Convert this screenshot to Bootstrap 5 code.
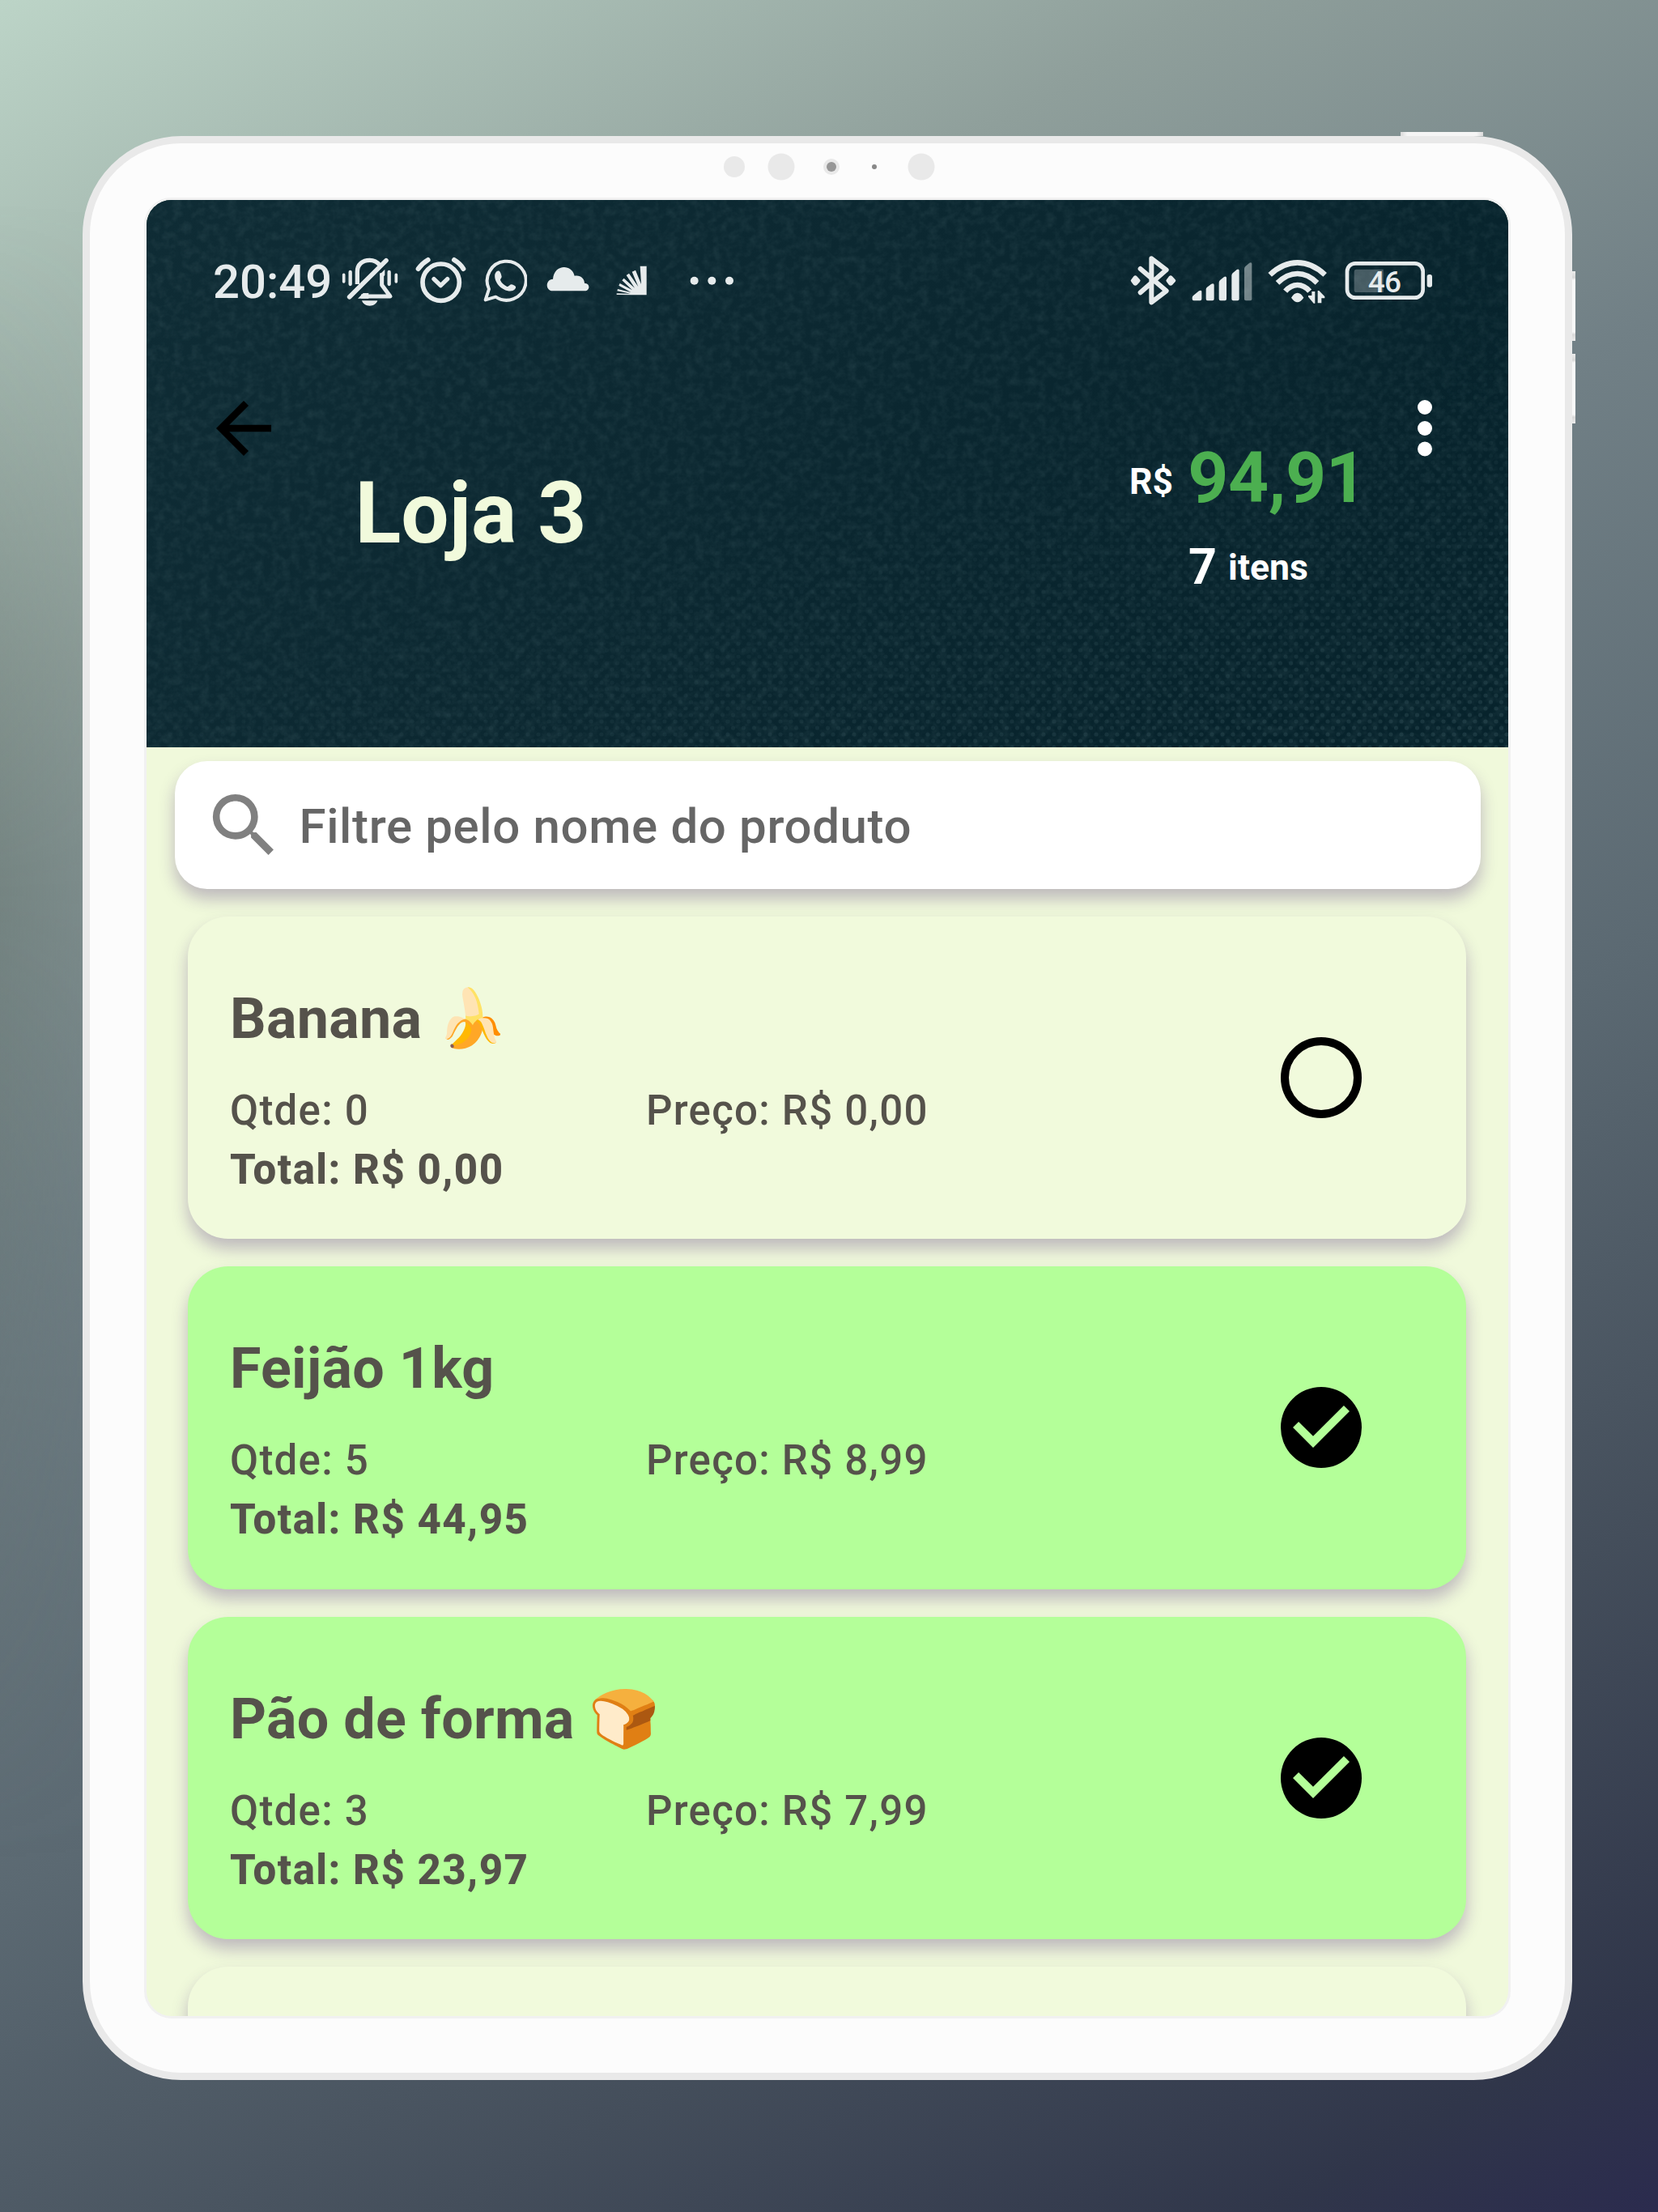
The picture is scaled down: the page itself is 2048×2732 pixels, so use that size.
<!DOCTYPE html>
<html lang="pt-BR">
<head>
<meta charset="utf-8">
<meta name="viewport" content="width=device-width, initial-scale=1">
<title>Loja 3</title>
<link href="https://cdn.jsdelivr.net/npm/bootstrap@5.3.0/dist/css/bootstrap.min.css" rel="stylesheet">
<style>
body{font-family:Roboto,"Noto Color Emoji",sans-serif;background:#56626b}
.stage{width:2048px;height:2732px;padding:168px 106px 163px 102px;
  background:linear-gradient(150deg,#bcd4c7 0%,#8f9f9b 22%,#718086 40%,#5b6972 60%,#444e5b 78%,#30364a 93%,#2b2b4e 100%)}
.stage::before{content:"";position:absolute;inset:0;background:linear-gradient(90deg,rgba(80,95,88,.3),rgba(80,95,88,0) 180px);
  -webkit-mask-image:linear-gradient(180deg,transparent 250px,#000 1100px,transparent 2300px);mask-image:linear-gradient(180deg,transparent 250px,#000 1100px,transparent 2300px)}
.tablet{width:1840px;height:2401px;border:9px solid #e9e9e9;border-radius:122px;background:#fcfcfc;padding:67px 67px 66px}
.key{background:linear-gradient(90deg,#d9d9d9,#f5f5f5 8%,#f5f5f5 92%,#d9d9d9)}
.key-top{left:1619px;top:-14px;width:102px;height:5px}
.key-side{left:1831px;width:4px;height:86px;background:linear-gradient(180deg,#ececec,#d9d9d9 9%,#f9f9f9 13%,#f9f9f9 87%,#d9d9d9 91%,#ececec)}
.key-up{top:158px}.key-down{top:260px}
.sensors{left:0;top:11px}
.glass{width:1688px;height:2249px;border:3px solid #f1f1f1;border-radius:34px;background:#f0f9db}
.topo{height:675.5px;background:#0d2a33;color:#fff;padding-top:53px}
.status{height:100px;padding-left:82px;color:#e6ebec}
.clock{font-size:58px;font-weight:500;line-height:97px;width:159px}
.g{display:block;flex:none;fill:#e6ebec}
.barra{height:440px}
.voltar{margin:78px 0 0 69px}
.loja{margin:173px 0 0 86.5px;font-size:105px;font-weight:700;line-height:124px;color:#f1fadc}
.soma{margin-top:138px;padding-right:21px}
.rs{font-size:44.5px;font-weight:700}
.valor{font-size:87.5px;font-weight:700;letter-spacing:-.4px;color:#4caf50;margin-left:18px}
.qt{font-size:61px;font-weight:700}
.linha1{height:104px;line-height:105px}
.linha1 .rs{margin-top:5px}
.linha2{height:80px;line-height:80px;margin:18px 0 0 73px}
.linha2 .rs{margin:1px 0 0 14px}
.mais{margin:78px 52.5px 0 0}
.lista{padding:17px 34.5px 0}
.busca{height:158.5px;border-radius:40px;background:#fff;padding:2px 0 0 34px;color:#666;font-size:60px;font-weight:500;letter-spacing:.63px}
.busca span{margin:3px 0 0 17px}
.sombra{box-shadow:0 12px 20px rgba(60,20,110,.28)}
.cartoes{padding:34px 17.5px 0 16.5px;gap:34px}
.item{height:398.3px;border-radius:50px;padding:85px 119.5px 0 52px;background:#f1fadc;color:#55524b;flex:none}
.feito{background:#b4ff99}
.nome{font-size:70px;line-height:82px;font-weight:700;letter-spacing:.3px;margin-bottom:36px}
.dado{font-size:51px;line-height:73px;font-weight:500;letter-spacing:1.25px}
.qtde{width:514px}
.forte{font-weight:800;letter-spacing:1.45px}
.marca{margin-top:54px}
</style>
</head>
<body>
<main class="stage position-relative overflow-hidden">
 <div class="tablet position-relative">
  <div class="key key-top position-absolute"></div>
  <div class="key-side key-up position-absolute"></div>
  <div class="key-side key-down position-absolute"></div>
  <svg class="sensors position-absolute" width="1822" height="40" viewBox="111 188 1822 40" fill="#e9e9e9">
   <circle cx="907" cy="206" r="13"/><circle cx="965" cy="206" r="16.5"/><circle cx="1027" cy="206" r="10"/><circle cx="1027" cy="206" r="6" fill="#979797"/><circle cx="1080" cy="206" r="3" fill="#888"/><circle cx="1138" cy="206" r="16.5"/>
  </svg>
  <div class="glass overflow-hidden">
   <header class="topo position-relative">
    <svg class="position-absolute top-0 start-0" width="1682" height="676">
     <defs>
      <filter id="tecido" x="0" y="0" width="100%" height="100%"><feTurbulence type="fractalNoise" baseFrequency=".09 .1" numOctaves="3" seed="4"/><feColorMatrix values="0 0 0 0 .3  0 0 0 0 .46  0 0 0 0 .48  .8 0 0 0 -.3"/></filter>
      <linearGradient id="fundo" x1="0" y1="0" x2="1" y2=".35"><stop offset="0" stop-color="#0f2c35"/><stop offset=".5" stop-color="#0c2831"/><stop offset="1" stop-color="#07232c"/></linearGradient>
      <pattern id="trama" width="13" height="16" patternUnits="userSpaceOnUse"><circle cx="3" cy="4" r="2.6" fill="#3b5a62"/><circle cx="9.5" cy="12" r="2.6" fill="#3b5a62"/></pattern>
      <linearGradient id="fade" x1=".5" y1=".2" x2="1" y2="1"><stop offset=".2" stop-color="#000"/><stop offset="1" stop-color="#888"/></linearGradient>
      <mask id="canto"><rect width="1682" height="676" fill="url(#fade)"/></mask>
     </defs>
     <rect width="1682" height="676" fill="url(#fundo)"/>
     <rect width="1682" height="676" filter="url(#tecido)" opacity=".24"/>
     <rect width="1682" height="676" fill="url(#trama)" mask="url(#canto)" opacity=".7"/>
    </svg>
    <div class="status d-flex position-relative">
     <span class="clock">20:49</span>
     <svg class="g" width="70" height="100" viewBox="546 0 210 300"><g fill="none" stroke="#e6ebec" stroke-linecap="round"><path stroke-width="11" d="M554 118v26M748 118v26"/><path stroke-width="13" d="M578 108v45M722 108v45"/><path stroke-width="17" d="M575 200 711 65"/><path stroke-width="16" stroke-linecap="butt" d="M604 153V107C604 79 624 64 650 64c16 0 28 7 37 18"/><path stroke-width="15" stroke-linejoin="round" stroke-linecap="butt" d="M695 112v44l31 42H618"/></g><path d="M687 117l19-19v22l-13 12zM606 206l20-20h20v20zM621 214h58c-4 12-16 19-29 19s-25-7-29-19z"/></svg>
     <svg class="g" style="margin-left:21px" width="63" height="100" viewBox="820 0 189 300" ><g fill="none" stroke="#e6ebec" stroke-linecap="round"><circle cx="915" cy="146" r="68" stroke-width="17"/><path stroke-width="18" d="M831 96q14-20 36-33M964 63q23 14 34 33"/><path stroke-width="16" stroke-linejoin="round" d="M889 134l25 24 25-24"/></g></svg>
     <svg class="g" style="margin-left:21px" width="54" height="100" viewBox="55 0 162 300"><path fill="none" stroke="#e6ebec" stroke-width="12" stroke-linejoin="round" d="M63 211l13-40A72 72 0 1 1 101 200z"/><path d="M98 116c3-10 12-15 17-11 4 4 7 14 8 20 0 5-6 8-5 13 5 12 15 19 25 24 6 2 9-8 15-8 7 1 14 4 17 8 2 7-6 14-14 16-35 4-68-32-63-62z"/></svg>
     <svg class="g" style="margin-left:24px" width="53" height="100" viewBox="289 0 159 300"><path d="M312 178c-28-1-28-42 1-44 4-56 70-57 80-12 22-4 36 9 37 27 23 1 20 29 1 29z"/></svg>
     <svg class="g" style="margin-left:32.500px" width="39" height="100" viewBox="545 0 117 300"><path d="M634 86h24v107h-54l-57-1v-5l51 1-49-10 2-7 49 12-45-25 4-8 46 25-38-36 7-8 40 36-31-47 10-7 34 49-23-55 13-6 21 52z"/></svg>
     <svg class="g" style="margin-left:52px" width="56" height="100" viewBox="819 0 168 300"><circle cx="836" cy="140" r="15"/><circle cx="901" cy="140" r="15"/><circle cx="966" cy="140" r="15"/></svg>
     <svg class="g ms-auto" width="57" height="100" viewBox="46 0 171 300"><path fill="none" stroke="#e6ebec" stroke-width="18" stroke-linecap="round" stroke-linejoin="round" d="M84 96l96 82-55 42V58l55 42-96 84"/><path d="M65 121q3 0 6 3l11 12q4 4 0 8l-11 12q-6 5-12 0l-9-12q-4-4 0-8l9-12q3-3 6-3zM196 121q3 0 6 3l11 12q4 4 0 8l-11 12q-6 5-12 0l-9-12q-4-4 0-8l9-12q3-3 6-3z"/></svg>
     <svg class="g" style="margin-left:19px" width="76" height="100" viewBox="275 0 228 300"><path d="M277 203q0-6 5-9l20-16q10-4 10 3v27q0 6-6 6h-23q-6 0-6-6zM328 172q0-5 4-8l16-12q10-4 10 4v52q0 6-6 6h-18q-6 0-6-6zM376 147q0-5 4-9l15-12q9-4 9 4v78q0 6-6 6h-16q-6 0-6-6zM423 121q0-5 4-9l15-13q9-4 9 4v105q0 6-6 6h-16q-6 0-6-6z"/><path opacity=".47" d="M470 96q0-5 4-9l15-13q9-4 9 4v130q0 6-6 6h-16q-6 0-6-6z"/></svg>
     <svg class="g" style="margin-left:18px" width="73" height="100" viewBox="557 0 219 300"><g fill="none" stroke="#e6ebec" stroke-width="20"><path d="M565 118Q613 73 667 73t102 45"/><path d="M593 148q36-34 74-34t73 34"/><path d="M622 179q20-23 45-23t45 23"/></g><path d="M644 203q10-18 23-18t23 18q-12 17-23 17t-23-17zM720 180h12v44h-5l-20-24v-5h13zM742 223v-46h5l21 22v6h-12v18z"/></svg>
     <svg class="g" style="margin-left:22px;margin-right:93px" width="109" height="100" viewBox="843 0 327 300"><rect x="852" y="76" width="281" height="127" rx="30" fill="none" stroke="#e6ebec" stroke-width="14"/><path opacity=".28" d="M886 98h100v85H886q-8 0-8-10v-65q0-10 8-10z"/><rect x="1148" y="117" width="19" height="47" rx="8"/><text x="929" y="182" font-family="Roboto" font-weight="500" font-size="111" textLength="124">46</text></svg>
    </div>
    <div class="barra d-flex align-items-start position-relative">
     <svg class="voltar flex-shrink-0" width="102" height="102" viewBox="0 0 24 24"><path d="M20 11H7.83l5.59-5.59L12 4l-8 8 8 8 1.41-1.41L7.83 13H20v-2z"/></svg>
     <h1 class="loja">Loja 3</h1>
     <div class="soma ms-auto">
      <div class="linha1 d-flex"><span class="rs">R$</span><span class="valor">94,91</span></div>
      <div class="linha2 d-flex"><span class="qt">7</span><span class="rs">itens</span></div>
     </div>
     <svg class="mais flex-shrink-0" width="102" height="102" viewBox="0 0 102 102" fill="#fff"><circle cx="51" cy="25" r="9"/><circle cx="51" cy="51" r="9"/><circle cx="51" cy="76.500" r="9"/></svg>
    </div>
   </header>
   <section class="lista">
    <div class="busca sombra d-flex align-items-center">
     <svg class="flex-shrink-0" width="103" height="103" viewBox="0 0 24 24" fill="#808080"><path d="M15.500 14h-.79l-.28-.27A6.471 6.471 0 0 0 16 9.500 6.500 6.500 0 1 0 9.500 16c1.610 0 3.090-.59 4.230-1.570l.27.28v.79l5 4.990L20.490 19l-4.990-5zm-6 0C7.010 14 5 11.990 5 9.500S7.010 5 9.500 5 14 7.010 14 9.500 11.990 14 9.500 14z"/></svg>
     <span>Filtre pelo nome do produto</span>
    </div>
    <div class="cartoes d-flex flex-column">
     <article class="item sombra d-flex">
      <div class="flex-grow-1">
       <div class="nome">Banana 🍌</div>
       <div class="dado d-flex"><span class="qtde">Qtde: 0</span><span>Preço: R$ 0,00</span></div>
       <div class="dado forte">Total: R$ 0,00</div>
      </div>
      <svg class="marca" width="120" height="120" viewBox="0 0 24 24"><circle cx="12" cy="12" r="9" fill="none" stroke="#000" stroke-width="2"/></svg>
     </article>
     <article class="item feito sombra d-flex">
      <div class="flex-grow-1">
       <div class="nome">Feijão 1kg</div>
       <div class="dado d-flex"><span class="qtde">Qtde: 5</span><span>Preço: R$ 8,99</span></div>
       <div class="dado forte">Total: R$ 44,95</div>
      </div>
      <svg class="marca" width="120" height="120" viewBox="0 0 24 24"><path d="M12 2a10 10 0 1 0 0 20 10 10 0 0 0 0-20zm-2 15-5-5 1.410-1.410L10 14.170l7.590-7.590L19 8l-9 9z"/></svg>
     </article>
     <article class="item feito sombra d-flex">
      <div class="flex-grow-1">
       <div class="nome">Pão de forma 🍞</div>
       <div class="dado d-flex"><span class="qtde">Qtde: 3</span><span>Preço: R$ 7,99</span></div>
       <div class="dado forte">Total: R$ 23,97</div>
      </div>
      <svg class="marca" width="120" height="120" viewBox="0 0 24 24"><path d="M12 2a10 10 0 1 0 0 20 10 10 0 0 0 0-20zm-2 15-5-5 1.410-1.410L10 14.170l7.590-7.590L19 8l-9 9z"/></svg>
     </article>
     <article class="item sombra"></article>
    </div>
   </section>
  </div>
 </div>
</main>
<script src="https://cdn.jsdelivr.net/npm/bootstrap@5.3.0/dist/js/bootstrap.bundle.min.js"></script>
</body>
</html>
